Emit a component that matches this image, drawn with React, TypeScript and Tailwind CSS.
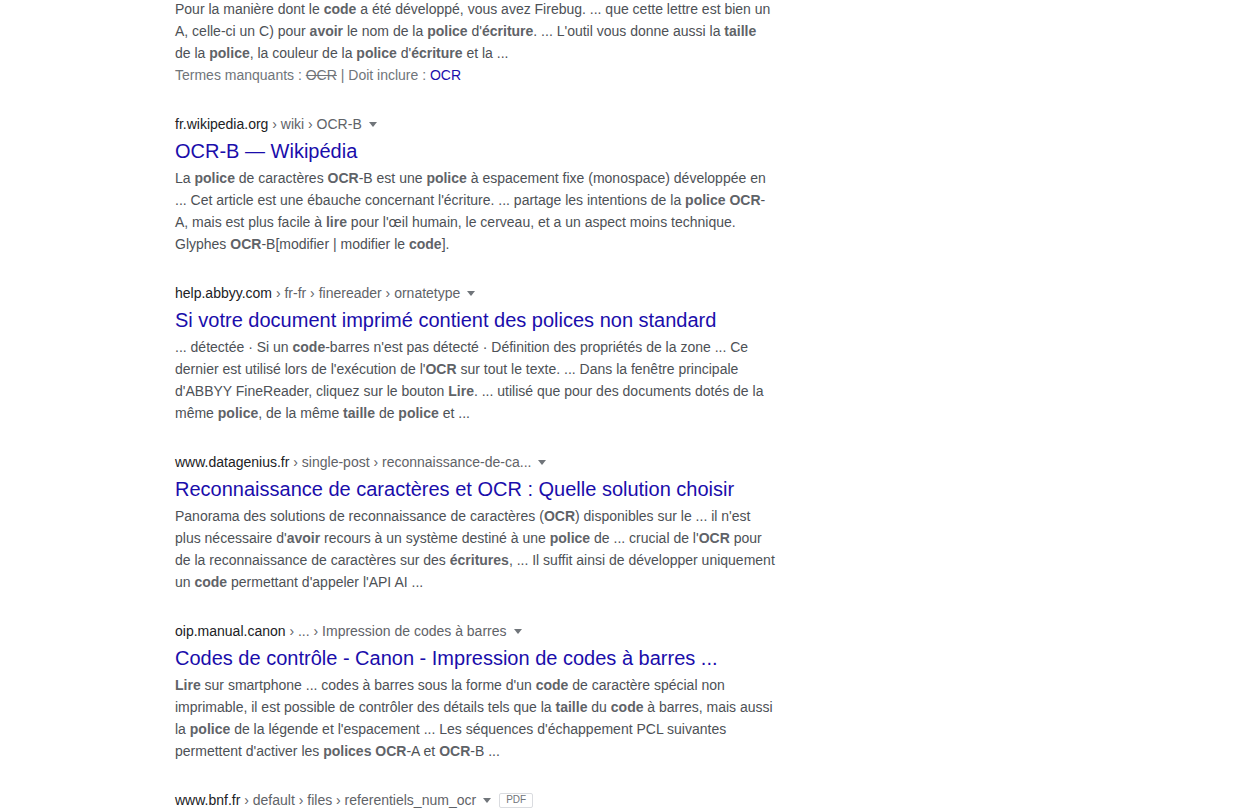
import React from "react";

type Part = string | { b: string };

type Result = {
  domain: string;
  crumbs: string;
  title?: string;
  snippet?: Part[];
  pdf?: boolean;
};

const results: Result[] = [
  {
    domain: "fr.wikipedia.org",
    crumbs: " › wiki › OCR-B",
    title: "OCR-B — Wikipédia",
    snippet: [
      "La ",
      { b: "police" },
      " de caractères ",
      { b: "OCR" },
      "-B est une ",
      { b: "police" },
      " à espacement fixe (monospace) développée en ... Cet article est une ébauche concernant l'écriture. ... partage les intentions de la ",
      { b: "police OCR" },
      "-A, mais est plus facile à ",
      { b: "lire" },
      " pour l'œil humain, le cerveau, et a un aspect moins technique. Glyphes ",
      { b: "OCR" },
      "-B[modifier | modifier le ",
      { b: "code" },
      "].",
    ],
  },
  {
    domain: "help.abbyy.com",
    crumbs: " › fr-fr › finereader › ornatetype",
    title: "Si votre document imprimé contient des polices non standard",
    snippet: [
      "... détectée · Si un ",
      { b: "code" },
      "-barres n'est pas détecté · Définition des propriétés de la zone ... Ce dernier est utilisé lors de l'exécution de l'",
      { b: "OCR" },
      " sur tout le texte. ... Dans la fenêtre principale d'ABBYY FineReader, cliquez sur le bouton ",
      { b: "Lire" },
      ". ... utilisé que pour des documents dotés de la même ",
      { b: "police" },
      ", de la même ",
      { b: "taille" },
      " de ",
      { b: "police" },
      " et ...",
    ],
  },
  {
    domain: "www.datagenius.fr",
    crumbs: " › single-post › reconnaissance-de-ca...",
    title: "Reconnaissance de caractères et OCR : Quelle solution choisir",
    snippet: [
      "Panorama des solutions de reconnaissance de caractères (",
      { b: "OCR" },
      ") disponibles sur le ... il n'est plus nécessaire d'",
      { b: "avoir" },
      " recours à un système destiné à une ",
      { b: "police" },
      " de ... crucial de l'",
      { b: "OCR" },
      " pour de la reconnaissance de caractères sur des ",
      { b: "écritures" },
      ", ... Il suffit ainsi de développer uniquement un ",
      { b: "code" },
      " permettant d'appeler l'API AI ...",
    ],
  },
  {
    domain: "oip.manual.canon",
    crumbs: " › ... › Impression de codes à barres",
    title: "Codes de contrôle - Canon - Impression de codes à barres ...",
    snippet: [
      { b: "Lire" },
      " sur smartphone ... codes à barres sous la forme d'un ",
      { b: "code" },
      " de caractère spécial non imprimable, il est possible de contrôler des détails tels que la ",
      { b: "taille" },
      " du ",
      { b: "code" },
      " à barres, mais aussi la ",
      { b: "police" },
      " de la légende et l'espacement ... Les séquences d'échappement PCL suivantes permettent d'activer les ",
      { b: "polices OCR" },
      "-A et ",
      { b: "OCR" },
      "-B ...",
    ],
  },
  {
    domain: "www.bnf.fr",
    crumbs: " › default › files › referentiels_num_ocr",
    pdf: true,
  },
];

function Snippet({ parts }: { parts: Part[] }) {
  return (
    <div className="mt-[3px] text-[14px] leading-[22px] text-[#4d5156]">
      {parts.map((p, i) =>
        typeof p === "string" ? (
          <span key={i}>{p}</span>
        ) : (
          <b key={i} className="font-bold text-[#5f6368]">
            {p.b}
          </b>
        )
      )}
    </div>
  );
}

function UrlLine({ r }: { r: Result }) {
  return (
    <div className="flex items-center h-[22px] text-[14px] leading-[22px]">
      <span className="text-[#202124]">{r.domain}</span>
      <span className="text-[#5f6368] whitespace-pre">{r.crumbs}</span>
      <span className="ml-[7px] mt-[1px] w-0 h-0 border-l-[4px] border-r-[4px] border-t-[5px] border-l-transparent border-r-transparent border-t-[#70757a]" />
      {r.pdf && (
        <span className="ml-[8px] px-[6px] h-[15px] flex items-center border border-[#dadce0] rounded-[2px] text-[10px] leading-[12px] text-[#70757a]">
          PDF
        </span>
      )}
    </div>
  );
}

export default function App() {
  return (
    <div className="min-h-screen bg-white overflow-hidden font-['Liberation_Sans',Arial,sans-serif]">
      <div className="ml-[175px] w-[600px] -mt-[2px]">
        {/* Tail of the previous result */}
        <div className="mb-[27px]">
          <div className="text-[14px] leading-[22px] text-[#4d5156]">
            Pour la manière dont le <b className="text-[#5f6368]">code</b> a été développé, vous avez Firebug. ... que cette lettre est bien un A, celle-ci un C) pour{" "}
            <b className="text-[#5f6368]">avoir</b> le nom de la <b className="text-[#5f6368]">police</b> d'
            <b className="text-[#5f6368]">écriture</b>. ... L'outil vous donne aussi la <b className="text-[#5f6368]">taille</b> de la{" "}
            <b className="text-[#5f6368]">police</b>, la couleur de la <b className="text-[#5f6368]">police</b> d'
            <b className="text-[#5f6368]">écriture</b> et la ...
          </div>
          <div className="text-[14px] leading-[22px] text-[#70757a]">
            Termes manquants : <span className="line-through">OCR</span> | Doit inclure : <span className="text-[#1a0dab]">OCR</span>
          </div>
        </div>

        {results.map((r) => (
          <div key={r.domain} className="mb-[27px]">
            <UrlLine r={r} />
            {r.title && (
              <h3 className="mt-[3px] text-[20px] leading-[26px] text-[#1a0dab]">{r.title}</h3>
            )}
            {r.snippet && <Snippet parts={r.snippet} />}
          </div>
        ))}
      </div>
    </div>
  );
}
